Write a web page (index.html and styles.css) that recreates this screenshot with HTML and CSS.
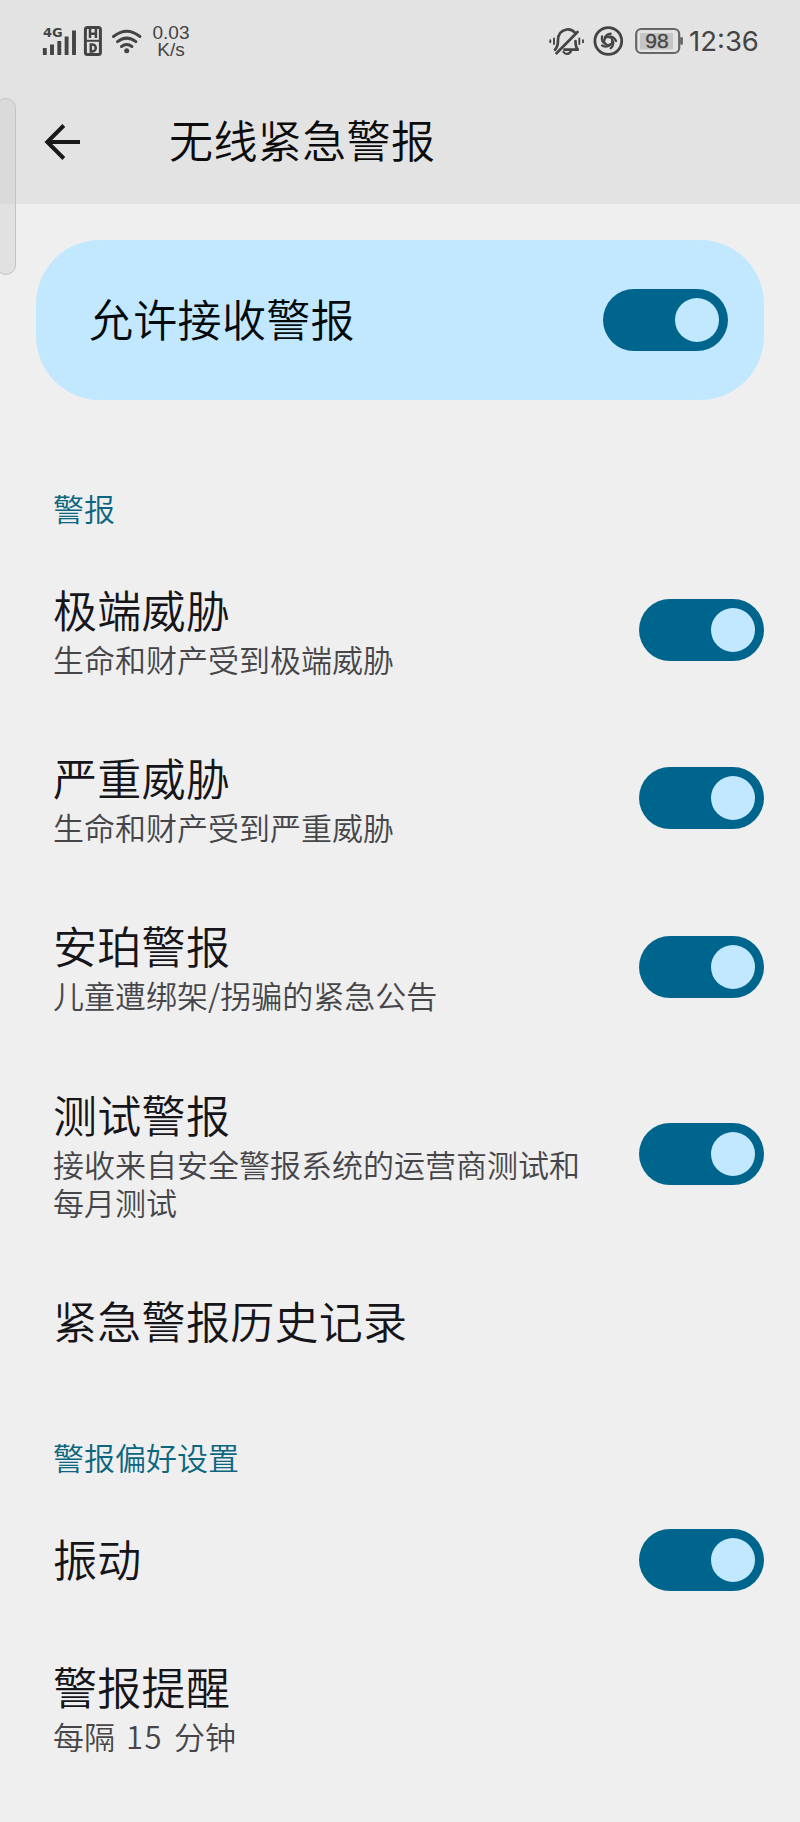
FILE: index.html
```html
<!DOCTYPE html>
<html lang="zh-CN">
<head>
<meta charset="utf-8">
<title>无线紧急警报</title>
<link rel="stylesheet" href="styles.css">
</head>
<body>
<div class="edge-handle"></div>
<header class="top">
  <div class="status">
    <svg class="status-left" width="106" height="36" viewBox="40 22 106 36" fill="none" stroke="#444">
      <text class="net" x="43" y="35.500">4G</text>
      <path d="M44.8 47v7M52 43.5V54M59.3 40V54M66.6 35.5V54M74 29.5V54" stroke-width="3.9"/>
      <rect x="85.4" y="26.4" width="15" height="27" rx="2" stroke-width="3"/>
      <path d="M85 39.8h16" stroke-width="2"/>
      <path d="M90 28v9M95.900 28v9M90 32.800h6M90.800 43.400v7h1.500a3.500 3.500 0 0 0 0-7z" stroke-width="2.500"/>
      <path d="M113.500 35.500q13.200-10.500 26.400 0M117.500 40.600q9.200-7 18.400 0M121.500 45.500q5.200-4 10.400 0" stroke-width="3" stroke-linecap="round"/>
      <circle cx="126.700" cy="49.800" r="2.500" fill="#444" stroke="none"/>
    </svg>
    <div class="speed"><span>0.03</span><span>K/s</span></div>
    <svg class="status-right" width="136" height="36" viewBox="547 22 136 36" fill="none" stroke="#444" stroke-linecap="round" stroke-linejoin="round">
      <path d="M555 48.700q3-3 3-9.500c0-6 3.500-9.700 8.500-10.700 4-.5 6.500.8 8.500 3.200M575.500 40c0 5 .5 6.500 2.300 8.700H564.500M556.500 52.200L577.500 31" stroke-width="2.700"/>
      <path d="M563.500 51c1.500 2.600 6 2.600 7.500-1" stroke-width="2.200"/>
      <path d="M550.300 39.200v2M554 37.500v5.500M579.300 37.500v5.500M583 39.200v2" stroke-width="1.900"/>
      <circle cx="608.300" cy="40" r="13.400" stroke-width="2.800"/>
      <g stroke-width="2.400">
        <path id="blade" d="M604.600 38.500c.3-3.200 2.500-5.300 6-5.800"/>
        <use href="#blade" transform="rotate(72 608.300 40)"/>
        <use href="#blade" transform="rotate(144 608.300 40)"/>
        <use href="#blade" transform="rotate(216 608.300 40)"/>
        <use href="#blade" transform="rotate(288 608.300 40)"/>
        <circle cx="608.300" cy="40" r="4" stroke-width="1.900"/>
      </g>
      <rect x="636.200" y="28" width="43" height="24" rx="5" stroke="#666" stroke-width="2.200"/>
      <path d="M681.500 37.500v5" stroke="#666" stroke-width="2.800"/>
      <rect x="640" y="32" width="33" height="16.500" fill="#c5c5c5" stroke="none"/>
      <text class="charge" x="657" y="47.400" text-anchor="middle">98</text>
    </svg>
    <span class="clock">12:36</span>
  </div>
  <div class="bar">
    <svg class="back" width="38" height="38" viewBox="43 123 38 38" fill="none" stroke="#191919" stroke-width="4">
      <path d="M80 142H47M63.800 125.500L47.300 142l16.500 16.500"/>
    </svg>
    <h1 class="heading">无线紧急警报</h1>
  </div>
</header>
<main class="content">
  <section class="master">
    <span class="title">允许接收警报</span>
    <span class="switch"></span>
  </section>

  <h2 class="category first">警报</h2>
  <section class="row">
    <div class="text"><span class="title">极端威胁</span><span class="summary">生命和财产受到极端威胁</span></div>
    <span class="switch"></span>
  </section>
  <section class="row">
    <div class="text"><span class="title">严重威胁</span><span class="summary">生命和财产受到严重威胁</span></div>
    <span class="switch"></span>
  </section>
  <section class="row">
    <div class="text"><span class="title">安珀警报</span><span class="summary">儿童遭绑架/拐骗的紧急公告</span></div>
    <span class="switch"></span>
  </section>
  <section class="row">
    <div class="text"><span class="title">测试警报</span><span class="summary">接收来自安全警报系统的运营商测试和<br>每月测试</span></div>
    <span class="switch"></span>
  </section>
  <section class="row">
    <div class="text"><span class="title">紧急警报历史记录</span></div>
  </section>

  <h2 class="category">警报偏好设置</h2>
  <section class="row">
    <div class="text"><span class="title">振动</span></div>
    <span class="switch"></span>
  </section>
  <section class="row reminder">
    <div class="text"><span class="title">警报提醒</span><span class="summary">每隔 <span class="minutes">15</span> 分钟</span></div>
  </section>
</main>
</body>
</html>
```
FILE: styles.css
```css
* { box-sizing: border-box; }
body {
  margin: 0;
  min-height: 1822px;
  background: #efefef;
  color: #15151a;
  font-family: "Noto Sans CJK SC", sans-serif;
  font-weight: 350;
}
.top { height: 204px; background: #e3e3e3; }
.status {
  display: flex;
  align-items: center;
  height: 80px;
  padding: 1px 40px 0;
  color: #444;
  font-family: "Liberation Sans", sans-serif;
}
.net { font: bold 13px "DejaVu Sans", sans-serif; fill: #444; stroke: none; }
.speed {
  display: flex;
  flex-direction: column;
  align-items: center;
  width: 50px;
  font-size: 19px;
  line-height: 17px;
}
.status-right { margin-left: auto; }
.charge { font: 21px "Liberation Sans", sans-serif; fill: #444; stroke: #444; stroke-width: .3px; }
.clock { width: 77px; padding-left: 6px; font: 27.500px "Inter", sans-serif; white-space: nowrap; }
.bar { display: flex; align-items: center; height: 124px; padding: 0 43px; }
.heading {
  margin: 0 0 0 88px;
  padding-bottom: 7px;
  color: #0c0c0c;
  font-size: 44px;
  font-weight: inherit;
  line-height: 60px;
  letter-spacing: .4px;
}
.edge-handle {
  position: absolute;
  left: -4px;
  top: 98px;
  width: 20px;
  height: 177px;
  border: 1px solid #c3c3c7;
  border-radius: 16px;
  background: rgba(205, 205, 208, .4);
}
.content { padding: 36px 36px 0; }
.master {
  display: flex;
  align-items: center;
  justify-content: space-between;
  height: 160px;
  margin-bottom: 39px;
  padding: 0 36px 0 53px;
  border-radius: 64px;
  background: #c2e8ff;
  color: #050a0d;
}
.title {
  padding-bottom: 3px;
  font-size: 44px;
  line-height: 55px;
  letter-spacing: .3px;
  white-space: nowrap;
}
.category {
  height: 107px;
  margin: 0;
  padding: 51px 0 0 17px;
  color: #0b6680;
  font-size: 31px;
  line-height: 40px;
  font-weight: inherit;
}
.category.first { padding-top: 49px; }
.row {
  display: flex;
  align-items: center;
  justify-content: space-between;
  padding: 36px 0 36px 17px;
}
.row:nth-of-type(6) { padding-bottom: 35px; }
.row.reminder { padding-top: 32px; }
.text { display: flex; flex-direction: column; }
.summary { color: #46464a; font-size: 31px; line-height: 38.200px; white-space: nowrap; }
.minutes { margin: 0 4px; letter-spacing: 1.500px; }
.switch {
  display: flex;
  flex: none;
  justify-content: flex-end;
  width: 125px;
  height: 62px;
  padding: 9px;
  border-radius: 31px;
  background: #00658c;
}
.switch::before { content: ""; width: 44px; height: 44px; border-radius: 50%; background: #c2e8ff; }
```
